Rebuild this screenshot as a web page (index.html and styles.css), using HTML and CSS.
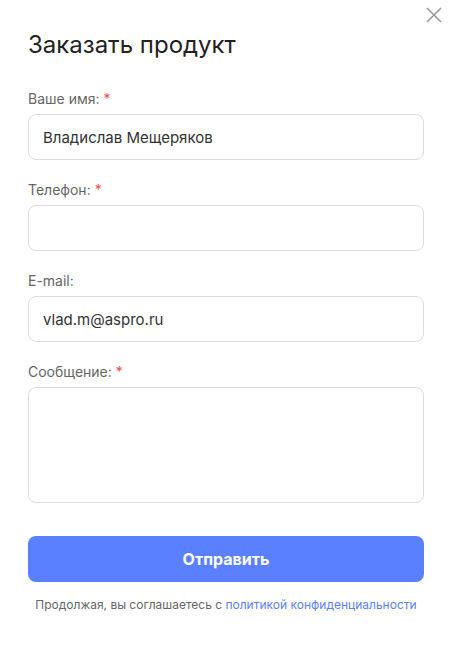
FILE: index.html
```html
<!DOCTYPE html>
<html lang="ru">
<head>
    <meta charset="UTF-8">
    <meta name="viewport" content="width=device-width, initial-scale=1.0">
    <title>Заказать продукт</title>
    <link rel="stylesheet" href="styles.css">
</head>
<body>
    <div class="popup">
        <button class="btn-close" type="button" aria-label="Закрыть">
            <svg width="16" height="16" viewBox="0 0 16 16">
                <path d="M1 1L15 15M15 1L1 15" stroke="#9a9a9a" stroke-width="1.6" fill="none"/>
            </svg>
        </button>

        <h2 class="popup-title">Заказать продукт</h2>

        <form class="order-form">
            <div class="form-field">
                <label>Ваше имя: <span class="req">*</span></label>
                <input type="text" value="Владислав Мещеряков">
            </div>
            <div class="form-field">
                <label>Телефон: <span class="req">*</span></label>
                <input type="text" value="">
            </div>
            <div class="form-field">
                <label>E-mail:</label>
                <input type="text" value="vlad.m@aspro.ru">
            </div>
            <div class="form-field">
                <label>Сообщение: <span class="req">*</span></label>
                <textarea></textarea>
            </div>

            <button class="btn-send" type="button">Отправить</button>

            <p class="agree">Продолжая, вы соглашаетесь с <a href="#">политикой конфиденциальности</a></p>
        </form>
    </div>
</body>
</html>
```

FILE: styles.css
```css
body {
    font-family: Inter, "Noto Sans", sans-serif;
    background-color: #fff;
    margin: 0;
    padding: 0;
}

.popup {
    position: relative;
    padding: 28px 28px 20px;
}

.btn-close {
    position: absolute;
    top: 7px;
    right: 10px;
    width: 16px;
    height: 16px;
    padding: 0;
    border: none;
    background: none;
    cursor: pointer;
}

.btn-close svg {
    display: block;
}

.popup-title {
    font-size: 24px;
    font-weight: 400;
    line-height: 34px;
    color: #222;
    margin: 0 0 27px;
}

.form-field {
    margin-bottom: 20px;
}

.form-field label {
    display: block;
    font-size: 14px;
    line-height: 20px;
    color: #666;
    margin-bottom: 5px;
}

.form-field .req {
    color: #f24b4b;
}

.form-field input,
.form-field textarea {
    display: block;
    box-sizing: border-box;
    width: 100%;
    height: 46px;
    padding: 0 14px;
    border: 1px solid #dcdcdc;
    border-radius: 8px;
    font-family: inherit;
    font-size: 15px;
    color: #333;
    outline: none;
    background: #fff;
}

.form-field textarea {
    height: 116px;
    resize: none;
    padding: 12px 14px;
}

.btn-send {
    display: block;
    width: 100%;
    height: 46px;
    margin-top: 33px;
    border: none;
    border-radius: 8px;
    background-color: #5b80ff;
    color: #fff;
    font-family: inherit;
    font-size: 16px;
    font-weight: 700;
    cursor: pointer;
}

.agree {
    margin: 14px 0 0;
    text-align: center;
    font-size: 12px;
    line-height: 18px;
    color: #666;
}

.agree a {
    color: #5b80ff;
    text-decoration: none;
}
```
